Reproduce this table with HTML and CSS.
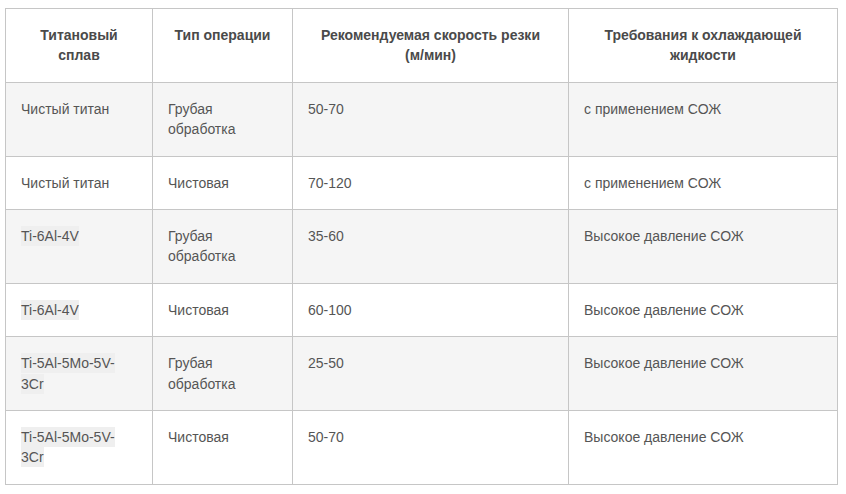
FILE: index.html
```html
<!DOCTYPE html>
<html lang="ru">
<head>
<meta charset="utf-8">
<title>Титановые сплавы</title>
<link rel="stylesheet" href="styles.css">
</head>
<body>
<div class="wrap">
<table class="spec">
  <colgroup>
    <col class="c1"><col class="c2"><col class="c3"><col class="c4">
  </colgroup>
  <thead>
    <tr>
      <th>Титановый сплав</th>
      <th>Тип операции</th>
      <th>Рекомендуемая скорость резки <span class="nw">(м/мин)</span></th>
      <th>Требования к охлаждающей жидкости</th>
    </tr>
  </thead>
  <tbody>
    <tr>
      <td>Чистый титан</td>
      <td>Грубая обработка</td>
      <td>50-70</td>
      <td>с применением СОЖ</td>
    </tr>
    <tr>
      <td>Чистый титан</td>
      <td>Чистовая</td>
      <td>70-120</td>
      <td>с применением СОЖ</td>
    </tr>
    <tr>
      <td><span class="hl">Ti-6Al-4V</span></td>
      <td>Грубая обработка</td>
      <td>35-60</td>
      <td>Высокое давление СОЖ</td>
    </tr>
    <tr>
      <td><span class="hl">Ti-6Al-4V</span></td>
      <td>Чистовая</td>
      <td>60-100</td>
      <td>Высокое давление СОЖ</td>
    </tr>
    <tr>
      <td><span class="hl">Ti-5Al-5Mo-5V-3Cr</span></td>
      <td>Грубая обработка</td>
      <td>25-50</td>
      <td>Высокое давление СОЖ</td>
    </tr>
    <tr>
      <td><span class="hl">Ti-5Al-5Mo-5V-3Cr</span></td>
      <td>Чистовая</td>
      <td>50-70</td>
      <td>Высокое давление СОЖ</td>
    </tr>
  </tbody>
</table>
</div>
</body>
</html>
```

FILE: styles.css
```css
html, body {
  margin: 0;
  padding: 0;
  background: #ffffff;
}

.wrap {
  padding: 8px 0 0 5px;
}

.spec {
  border-collapse: collapse;
  table-layout: fixed;
  width: 832px;
  font-family: "Liberation Sans", Arial, sans-serif;
  font-size: 14px;
  line-height: 20.4px;
  color: #555555;
}

.c1 { width: 147px; }
.c2 { width: 140px; }
.c3 { width: 276px; }
.c4 { width: 269px; }

.spec th,
.spec td {
  border: 1px solid #c6c6c6;
  padding: 16px 15px;
  vertical-align: top;
  text-align: left;
}

.spec th {
  font-weight: bold;
  text-align: center;
  color: #4a4a4a;
  background: #ffffff;
}

.nw {
  white-space: nowrap;
}

.spec tbody tr:nth-child(odd) td {
  background: #f5f5f5;
}

.hl {
  background: #efefef;
  padding: 2px 0;
}
```
